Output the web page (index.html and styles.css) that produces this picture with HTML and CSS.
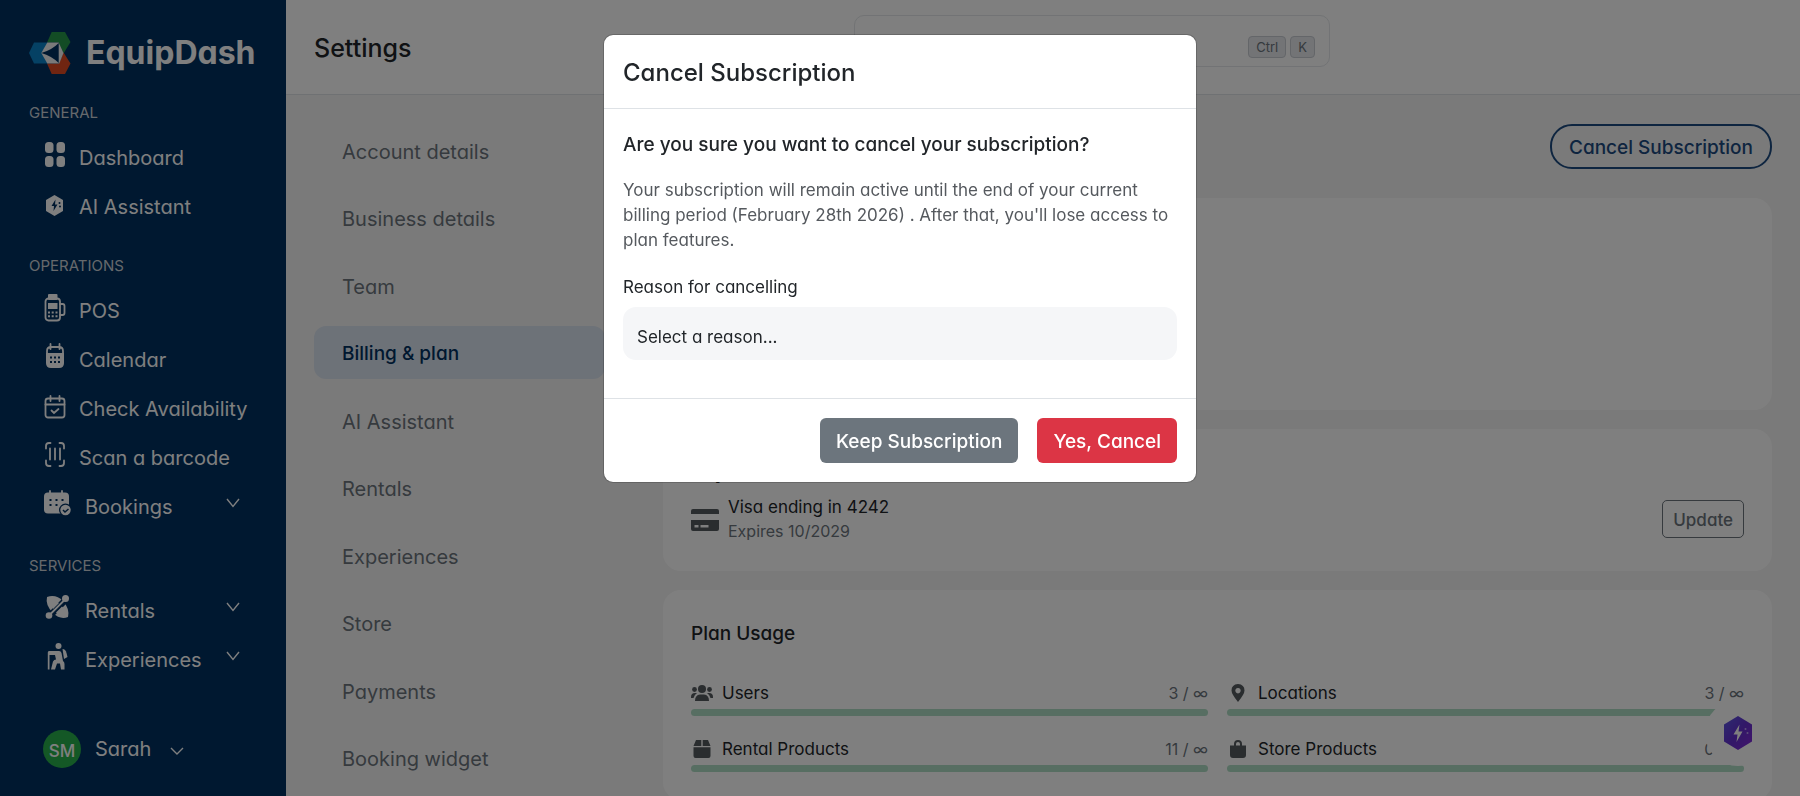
FILE: index.html
```html
<!DOCTYPE html>
<html lang="en">
<head>
  <meta charset="UTF-8" />
  <meta name="viewport" content="width=device-width, initial-scale=1.0" />
  <title>EquipDash - Settings</title>
  <link rel="stylesheet" href="styles.css">
</head>
<body>

  <div class="app">

    <!-- Sidebar -->
    <aside class="sidebar">
      <a class="logo" href="#">
        <svg width="42" height="44" viewBox="0 0 42 44" aria-hidden="true">
          <path d="M22.700 1H36l5.500 10-7 11.500L29.500 11.500H18z" fill="#26984a"/>
          <path d="M34.500 21.500l7 11L36 43H22.700l-4.700-10.500h12z" fill="#e04a22"/>
          <path d="M0 22l5-10.500h13.500v21H5z" fill="#0a82c8"/>
          <path d="M18.300 11.500h11.400L34.500 22l-4.200 10.500h-12L12.300 22z" fill="#f4f4f4"/>
          <path d="M29.700 12v20q-7-7-17.400-10Q23 19 29.700 12z" fill="#003060"/>
        </svg>
        <span>EquipDash</span>
      </a>

      <h2 class="menu-title">GENERAL</h2>
      <ul class="menu">
        <li><a href="#">
          <svg class="icon" viewBox="0 0 28 28"><rect x="2" y="1" width="8.500" height="11" rx="3.500"/><rect x="13.500" y="1" width="8.500" height="11" rx="3.500"/><rect x="2" y="15" width="8.500" height="11" rx="3.500"/><rect x="13.500" y="15" width="8.500" height="11" rx="3.500"/></svg>
          Dashboard</a></li>
        <li><a href="#">
          <svg class="icon" viewBox="0 0 28 28"><path d="M11.500 5l8.500 5v11l-8.500 5L3 21V10z"/><path class="cut" d="M12.500 9.500l-4 6.500h2.500l-.500 5 4-6.500h-2.500z"/><circle class="cut" cx="16.500" cy="13" r="1"/><circle class="cut" cx="17" cy="16.500" r="1"/></svg>
          AI Assistant</a></li>
      </ul>

      <h2 class="menu-title">OPERATIONS</h2>
      <ul class="menu">
        <li><a href="#">
          <svg class="icon" viewBox="0 0 28 28"><rect x="5" y="0" width="9.500" height="6" rx="1"/><rect class="line" x="2.500" y="4.500" width="14.500" height="22" rx="3"/><path class="line" d="M17 10h2.500q2 0 2 2v7q0 2-2 2H17"/><rect x="5" y="9" width="9.500" height="6"/><path d="M5 17.500h2v2H5zM8.700 17.500h2v2h-2zM12.500 17.500h2v2h-2zM5 21.300h2v2H5zM8.700 21.300h2v2h-2zM12.500 21.300h2v2h-2z"/></svg>
          POS</a></li>
        <li><a href="#">
          <svg class="icon" viewBox="0 0 28 28"><path class="line" d="M4 10V8q0-4 4-4h8q4 0 4 4v2M7.500 1v5M16.500 1v5"/><path d="M3 10h18v10q0 5-5 5H8q-5 0-5-5z"/><path class="cut" d="M7 13.500h2v2H7zM11 13.500h2v2h-2zM15 13.500h2v2h-2zM7 18h2v2H7zM11 18h2v2h-2zM15 18h2v2h-2z"/></svg>
          Calendar</a></li>
        <li><a href="#">
          <svg class="icon" viewBox="0 0 28 28"><rect class="line" x="2.500" y="6.500" width="19" height="19" rx="2.500"/><path class="line" d="M2.500 12.500h19M7.500 4v5M16.500 4v5M8.500 18.500l2.500 2.500 4.500-4"/></svg>
          Check Availability</a></li>
        <li><a href="#">
          <svg class="icon" viewBox="0 0 28 28"><path class="line" d="M7.500 2H6Q3 2 3 5v2.500M16.500 2H18q3 0 3 3v2.500M7.500 25H6q-3 0-3-3v-2.500M16.500 25H18q3 0 3-3v-2.500M7 7.500v11M12 7.500v11M17 7.500v11"/></svg>
          Scan a barcode</a></li>
        <li><a class="parent" href="#">
          <svg class="icon" viewBox="0 0 28 28"><rect x="1" y="2.500" width="25" height="21" rx="4"/><path class="line" d="M7 1v3M19 1v3"/><path class="cut" d="M6.500 9h2v2h-2zM12.500 9h2v2h-2zM18.500 9h2v2h-2zM6.500 14h2v2h-2zM12.500 14h2v2h-2z"/><circle class="cut" cx="22.500" cy="20" r="6.500"/><circle cx="22.500" cy="20" r="5.200"/><path class="tick" d="M20 20l2 2 3.500-3"/></svg>
          Bookings
          <svg class="chevron" viewBox="0 0 14 10"><path d="M1 1l6 7.500L13 1"/></svg></a></li>
      </ul>

      <h2 class="menu-title">SERVICES</h2>
      <ul class="menu">
        <li><a class="parent" href="#">
          <svg class="icon" viewBox="0 0 28 28"><path d="M4 3q9-3 16 4 7 8 5 16-8 3-15-4Q2 11 4 3z"/><path class="cut" d="M4 20L19.500 4.500l4.500 4.500L8.500 24.500z"/><path class="line" d="M7 20.500L21 6.500"/><path d="M9.500 12.500l4.500-4.500 2 1-6 6zM13 18.500l6-6 1.500 1.500-6 6z"/><circle cx="22.500" cy="4.500" r="3.500"/><circle cx="6" cy="21.500" r="3.300"/></svg>
          Rentals
          <svg class="chevron" viewBox="0 0 14 10"><path d="M1 1l6 7.500L13 1"/></svg></a></li>
        <li><a class="parent" href="#">
          <svg class="icon" viewBox="0 0 28 28"><circle cx="15.500" cy="3" r="3"/><path d="M6 8h10q2 0 2.500 2l1.500 8q1.500 1 1.500 3v5.500h-3.500l-1-6H14l-2 6H8l2-8q1-2 3-2l-1-4.500H6.500v14.500H4.800V9.500Q4.800 8 6 8z"/><path d="M19.500 6q3 0 4 4l1 4-3.500 2z"/></svg>
          Experiences
          <svg class="chevron" viewBox="0 0 14 10"><path d="M1 1l6 7.500L13 1"/></svg></a></li>
      </ul>

      <button class="user" type="button">
        <span class="avatar">SM</span>
        Sarah
        <svg class="chevron" viewBox="0 0 14 10"><path d="M1 2l6 6 6-6"/></svg>
      </button>
    </aside>

    <main class="main">
      <header class="topbar">
        <h1>Settings</h1>
        <label class="search">
          <input type="search" aria-label="Search">
          <kbd>Ctrl</kbd>
          <kbd>K</kbd>
        </label>
      </header>

      <div class="page">
        <!-- Settings tabs -->
        <nav class="tabs">
          <a href="#">Account details</a>
          <a href="#">Business details</a>
          <a href="#">Team</a>
          <a class="active" href="#">Billing &amp; plan</a>
          <a href="#">AI Assistant</a>
          <a href="#">Rentals</a>
          <a href="#">Experiences</a>
          <a href="#">Store</a>
          <a href="#">Payments</a>
          <a href="#">Booking widget</a>
        </nav>

        <div class="content">
          <button class="btn btn-pill" type="button">Cancel Subscription</button>

          <section class="card card-plan"></section>

          <section class="card">
            <h2>Payment method</h2>
            <div class="payment">
              <svg width="28" height="24" viewBox="0 0 28 24" aria-hidden="true"><path d="M0 7V4q0-2 2-2h24q2 0 2 2v3z"/><path fill-rule="evenodd" d="M0 13h28v9q0 2-2 2H2q-2 0-2-2zM3.500 18v2.500H7.500V18zM9.500 18v2.500h8V18z"/></svg>
              <div class="payment-text">
                <p>Visa ending in 4242</p>
                <p class="muted">Expires 10/2029</p>
              </div>
              <button class="btn btn-small" type="button">Update</button>
            </div>
          </section>

          <section class="card">
            <h2>Plan Usage</h2>
            <div class="usage">
              <div class="usage-item">
                <svg width="22" height="18" viewBox="0 0 22 18"><circle cx="11" cy="5" r="4"/><circle cx="3.500" cy="5.500" r="2.400"/><circle cx="18.500" cy="5.500" r="2.400"/><path d="M4 17q0-6 5-6.500h4q5 .5 5 6.500zM0 13q0-4 4-4h2q-3 2-3.500 5H0zM22 13q0-4-4-4h-2q3 2 3.500 5H22z"/></svg>
                <span>Users</span>
                <span class="count">3 / ∞</span>
                <div class="bar"></div>
              </div>
              <div class="usage-item">
                <svg width="22" height="18" viewBox="0 0 22 18"><path fill-rule="evenodd" d="M11 0q6.500.5 6.500 6.500Q17.500 10 11 18 4.500 10 4.500 6.500 4.500.5 11 0zM11 4a2.700 2.700 0 1 0 .01 0z"/></svg>
                <span>Locations</span>
                <span class="count">3 / ∞</span>
                <div class="bar"></div>
              </div>
              <div class="usage-item">
                <svg width="22" height="18" viewBox="0 0 22 18"><path d="M5 0h5.300v6H2.500zM11.700 0H17l2.500 6h-7.800zM2.500 7.300h17V16q0 2-2 2h-13q-2 0-2-2z"/></svg>
                <span>Rental Products</span>
                <span class="count">11 / ∞</span>
                <div class="bar"></div>
              </div>
              <div class="usage-item">
                <svg width="22" height="18" viewBox="0 0 22 18"><path fill-rule="evenodd" d="M3 5.500h4V4q0-4 4-4t4 4v1.500h4V15q0 3-3 3H6q-3 0-3-3zM9 5.500h4V4q0-2-2-2T9 4z"/></svg>
                <span>Store Products</span>
                <span class="count">0 / ∞</span>
                <div class="bar"></div>
              </div>
            </div>
          </section>
        </div>
      </div>
    </main>

    <!-- Assistant launcher -->
    <button class="assistant" type="button" aria-label="AI Assistant">
      <svg width="28" height="34" viewBox="0 0 28 34">
        <defs>
          <linearGradient id="hex" x1="0" y1="0" x2="1" y2="1">
            <stop offset="0" stop-color="#5a58e0"/>
            <stop offset=".5" stop-color="#6430d0"/>
            <stop offset="1" stop-color="#8428d8"/>
          </linearGradient>
        </defs>
        <path d="M14 0l14 8.500v17L14 34 0 25.500v-17z" fill="url(#hex)"/>
        <path d="M15.500 8.500L9.500 18.500h4l-1 7.500 6-10.500h-4z" fill="#fff"/>
        <circle cx="21.500" cy="13" r="1" fill="#b8a0f0"/>
        <circle cx="23.500" cy="17" r="1" fill="#b8a0f0"/>
      </svg>
    </button>
  </div>

  <!-- Cancel modal -->
  <div class="backdrop">
    <div class="modal" role="dialog" aria-modal="true" aria-labelledby="modal-title">
      <div class="modal-header">
        <h2 id="modal-title">Cancel Subscription</h2>
      </div>
      <div class="modal-body">
        <h3>Are you sure you want to cancel your subscription?</h3>
        <p>Your subscription will remain active until the end of your current billing period (February 28th 2026) . After that, you'll lose access to plan features.</p>
        <label for="reason">Reason for cancelling</label>
        <select id="reason">
          <option>Select a reason...</option>
        </select>
      </div>
      <div class="modal-footer">
        <button class="btn btn-secondary" type="button">Keep Subscription</button>
        <button class="btn btn-danger" type="button">Yes, Cancel</button>
      </div>
    </div>
  </div>

</body>
</html>
```

FILE: styles.css
```css
* {
  box-sizing: border-box;
}

body {
  margin: 0;
  height: 100vh;
  overflow: hidden;
  background: #f5f5f5;
  color: #212529;
  font-family: Inter, "Liberation Sans", sans-serif;
  font-feature-settings: "cv11"; /* single-storey a */
  font-size: 17px;
  line-height: 24px;
}

h1, h2, h3, p, ul {
  margin: 0;
  padding: 0;
}

h1, h2, h3 {
  font-weight: 500;
}

a {
  color: inherit;
  text-decoration: none;
}

button, input, select {
  font: inherit;
  font-feature-settings: inherit;
  color: inherit;
}

.app {
  display: flex;
  height: 100vh;
}

/* Sidebar */
.sidebar {
  display: flex;
  flex-direction: column;
  flex: 0 0 286px;
  padding: 31px 29px 28px;
  background: #003060;
  color: #fff;
}

.logo {
  display: flex;
  align-items: center;
  gap: 15px;
  height: 44px;
  margin-bottom: 26px;
  font-size: 32px;
  font-weight: 700;
}

.menu-title {
  margin-bottom: 7px;
  font-size: 15px;
  font-weight: 400;
  color: #ccd2d8;
}

.menu {
  margin-bottom: 24px;
  list-style: none;
}

.menu a {
  display: flex;
  align-items: center;
  gap: 8px;
  height: 49px;
  padding: 3px 0 0 14px;
  font-size: 20px;
  white-space: nowrap;
}

.menu .parent {
  gap: 14px;
}

.icon {
  flex: none;
  width: 28px;
  height: 28px;
  margin-bottom: 6px;
  fill: #fff;
}

.icon .cut {
  fill: #003060;
}

.icon .line {
  fill: none;
  stroke: #fff;
  stroke-width: 1.8;
  stroke-linecap: round;
}

.icon .tick {
  fill: none;
  stroke: #003060;
  stroke-width: 1.5;
}

.chevron {
  width: 14px;
  height: 10px;
  fill: none;
  stroke: #fff;
  stroke-width: 1.4;
}

.menu .chevron {
  margin: 0 17px 8px auto;
}

.user {
  display: flex;
  align-items: center;
  gap: 14px;
  margin-top: auto;
  padding: 0 0 0 14px;
  border: 0;
  background: none;
  font-size: 20px;
}

.user .chevron {
  margin: 3px 0 0 5px;
}

.avatar {
  width: 38px;
  height: 38px;
  padding-top: 2px;
  border-radius: 50%;
  background: #28b04c;
  font-size: 17px;
  font-weight: 500;
  line-height: 38px;
}

/* Main area */
.main {
  flex: 1;
  min-width: 0;
}

.topbar {
  display: grid;
  grid-template-columns: 540px minmax(0, 476px);
  align-items: center;
  height: 95px;
  padding: 0 28px;
  background: #fff;
  border-bottom: 1px solid #dee2e6;
}

.topbar h1 {
  padding-top: 2px;
  font-size: 25px;
}

.search {
  display: flex;
  align-items: center;
  align-self: start;
  gap: 4px;
  height: 52px;
  margin-top: 15px;
  padding: 0 14px;
  border: 1px solid #e4e7ea;
  border-radius: 10px;
}

.search input {
  flex: 1;
  min-width: 0;
  border: 0;
  background: none;
}

kbd {
  margin-top: 12px;
  padding: 0 7px;
  border: 1px solid #c8ccd2;
  border-radius: 4px;
  background: #e6e8ec;
  color: #6c757d;
  font-family: inherit;
  font-size: 13px;
  line-height: 20px;
}

.page {
  display: flex;
  gap: 58px;
  padding: 29px 28px 0;
}

.tabs {
  display: flex;
  flex-direction: column;
  justify-content: space-between;
  flex: 0 0 291px;
  height: calc(100vh - 136px);
  color: #6c757d;
  font-size: 20px;
}

.tabs a {
  padding: 16px 28px 13px;
  border-radius: 12px;
}

.tabs .active {
  background: #dbe4f0;
  color: #003060;
  font-size: 19px;
  font-weight: 500;
}

.content {
  display: flex;
  flex-direction: column;
  gap: 19px;
  flex: 1;
  min-width: 0;
}

.btn {
  padding: 11px 15px 8px;
  border: 1px solid transparent;
  border-radius: 6px;
  font-size: 19px;
  font-weight: 500;
}

.btn-pill {
  align-self: flex-end;
  margin-bottom: 10px;
  border: 2px solid #1c4a80;
  border-radius: 22px;
  padding: 10px 17px 7px;
  background: none;
  color: #1c4a80;
}

.btn-small {
  margin-left: auto;
  padding: 7px 10px 5px;
  border-color: #6c757d;
  border-radius: 5px;
  background: none;
  color: #6c757d;
  font-size: 17px;
}

.card {
  padding: 28px;
  border-radius: 18px;
  background: #fff;
}

.card-plan {
  min-height: 212px;
}

.card h2 {
  font-size: 19px;
  line-height: 32px;
}

.payment {
  display: flex;
  align-items: center;
  gap: 9px;
  margin-top: 6px;
}

.payment svg, .usage svg {
  fill: #555a5f;
}

.muted, .count {
  color: #6c757d;
  font-size: 16px;
}

.usage {
  display: grid;
  grid-template-columns: 1fr 1fr;
  gap: 21px 19px;
  margin-top: 31px;
}

.usage-item {
  display: flex;
  flex-wrap: wrap;
  align-items: center;
  gap: 4px 9px;
}

.count {
  margin-left: auto;
}

.bar {
  flex: 0 0 100%;
  height: 7px;
  border-radius: 4px;
  background: #aedcc4;
}

.assistant {
  position: fixed;
  right: 29px;
  bottom: 30px;
  display: grid;
  place-items: center;
  width: 66px;
  height: 66px;
  border: 0;
  border-radius: 50%;
  background: #fff;
}

/* Modal */
.backdrop {
  position: fixed;
  inset: 0;
  padding: 34px 20px;
  background: rgba(0, 0, 0, 0.5);
}

.modal {
  max-width: 594px;
  margin: 0 auto;
  border: 1px solid rgba(0, 0, 0, 0.18);
  border-radius: 10px;
  background: #fff;
  background-clip: padding-box;
}

.modal-header {
  padding: 22px 19px 19px;
  border-bottom: 1px solid #dee2e6;
}

.modal-header h2 {
  font-size: 24px;
  line-height: 32px;
}

.modal-body {
  padding: 24px 19px 38px;
}

.modal-body h3 {
  margin-bottom: 21px;
  font-size: 19px;
}

.modal-body p {
  margin-bottom: 22px;
  color: #55595e;
  line-height: 25px;
}

.modal-body label {
  display: block;
  margin-bottom: 8px;
}

.modal-body select {
  width: 100%;
  height: 53px;
  padding: 6px 14px 0;
  border: 0;
  border-radius: 13px;
  background: #f5f6f8;
  appearance: none;
}

.modal-footer {
  display: flex;
  justify-content: flex-end;
  gap: 19px;
  padding: 19px;
  border-top: 1px solid #dee2e6;
}

.btn-secondary {
  background: #6c757d;
  color: #fff;
}

.btn-danger {
  background: #dc3545;
  color: #fff;
}
```
